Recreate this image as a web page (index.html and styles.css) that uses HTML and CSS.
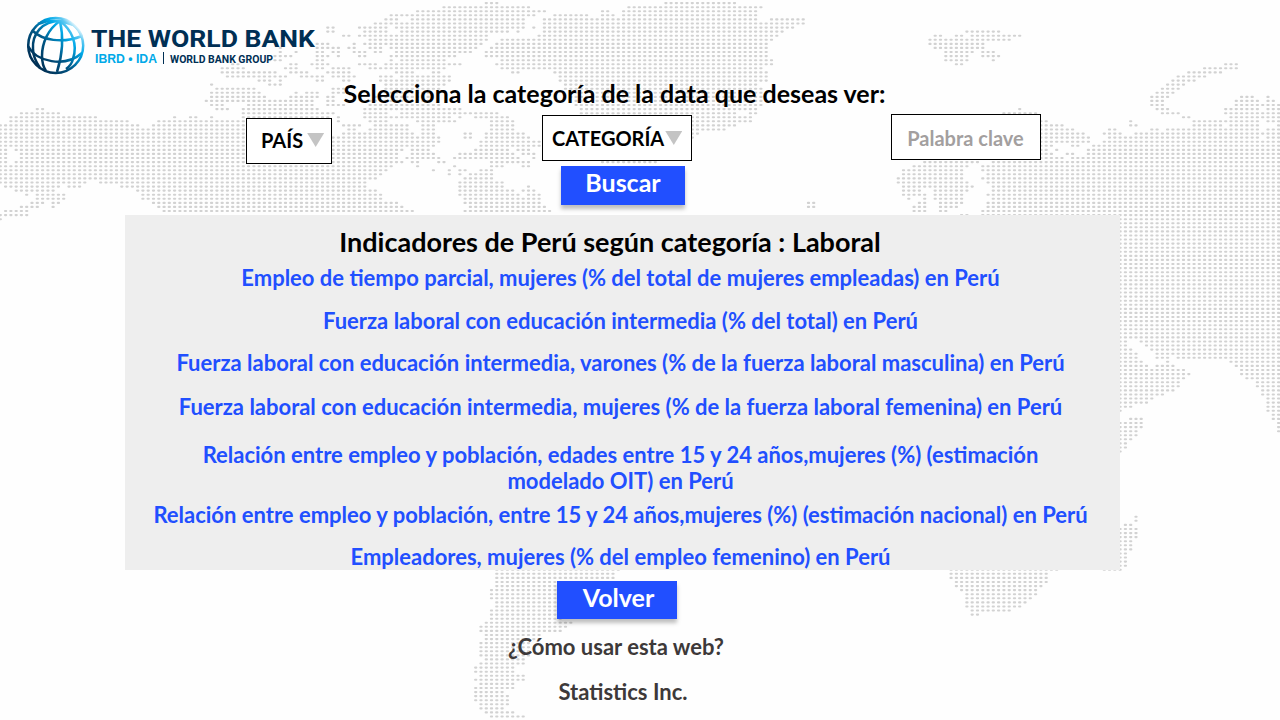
FILE: index.html
```html
<!DOCTYPE html>
<html lang="es">
<head>
<meta charset="utf-8">
<title>The World Bank - Indicadores</title>
<link rel="stylesheet" href="styles.css">
</head>
<body>
<svg class="map" width="1280" height="720" aria-hidden="true"><path id="dots"/></svg>
<div class="page">
  <header class="header">
    <svg class="logo" width="330" height="80" viewBox="0 0 330 80">
      <defs>
        <linearGradient id="globe" gradientUnits="userSpaceOnUse" x1="38" y1="66" x2="79" y2="27">
          <stop offset="0" stop-color="#002f54"/><stop offset=".38" stop-color="#005685"/>
          <stop offset=".72" stop-color="#00a9e8"/><stop offset=".88" stop-color="#5cc8f2"/><stop offset="1" stop-color="#fff"/>
        </linearGradient>
      </defs>
      <g fill="none" stroke="url(#globe)" stroke-width="2.5">
        <circle cx="55.7" cy="45.5" r="27.5" fill="#fff"/>
        <path d="M60 21C42 21 32 34 33 49c0 7 3 13 7 19"/>
        <path d="M60 21C48 29 42 43 42 56c0 7 2 12 4 15"/>
        <path d="M60 21c3 13 3 32-3 51"/>
        <path d="M60 21c12 9 18 23 13 38-1 4-4 8-7 10"/>
        <path d="M60 21c10 0 18 6 22 16"/>
        <path d="M38 24c7-3 14-4 22-3l14 4"/>
        <path d="M33 31c9 9 29 13 49 5"/>
        <path d="M28 46c8 16 37 22 54 7"/>
      </g>
      <text class="logo-name" x="91" y="47" textLength="224" lengthAdjust="spacingAndGlyphs">THE WORLD BANK</text>
      <text class="logo-ibrd" x="95" y="63.2" textLength="62" lengthAdjust="spacingAndGlyphs">IBRD • IDA</text>
      <rect x="163" y="52" width="1" height="12" fill="#002f54"/>
      <text class="logo-group" x="170" y="63" textLength="103" lengthAdjust="spacingAndGlyphs">WORLD BANK GROUP</text>
    </svg>
  </header>
  <h1 class="title">Selecciona la categoría de la data que deseas ver:</h1>
  <div class="filters">
    <div class="select country"><span>PAÍS</span><i class="arrow"></i></div>
    <div class="select category"><span>CATEGORÍA</span><i class="arrow"></i></div>
    <div class="select keyword"><span>Palabra clave</span></div>
  </div>
  <div class="button search">Buscar</div>
  <main class="panel">
    <h2 class="heading">Indicadores de Perú según categoría : Laboral</h2>
    <div class="item i1">Empleo de tiempo parcial, mujeres (% del total de mujeres empleadas) en Perú</div>
    <div class="item i2">Fuerza laboral con educación intermedia (% del total) en Perú</div>
    <div class="item i3">Fuerza laboral con educación intermedia, varones (% de la fuerza laboral masculina) en Perú</div>
    <div class="item i4">Fuerza laboral con educación intermedia, mujeres (% de la fuerza laboral femenina) en Perú</div>
    <div class="item i5">Relación entre empleo y población, edades entre 15 y 24 años,mujeres (%) (estimación<br>modelado OIT) en Perú</div>
    <div class="item i6">Relación entre empleo y población, entre 15 y 24 años,mujeres (%) (estimación nacional) en Perú</div>
    <div class="item i7">Empleadores, mujeres (% del empleo femenino) en Perú</div>
  </main>
  <div class="button back">Volver</div>
  <footer class="footer">
    <div class="help">¿Cómo usar esta web?</div>
    <div class="brand">Statistics Inc.</div>
  </footer>
</div>
<script src="map.js"></script>
</body>
</html>
```

FILE: map.js
```js
// Land runs of the dotted world map, "rows: from-to from-to", in page pixels.
const land = `
0: 485-499 664-735
1: 443-530 627-762
2: 417-546 602-610 622-757
3: 390-414 417-503 507-535 553-588 602-613 622-709 713-757
4: 385-399 412-524 543-594 598-757 770-803
5: 374-399 400-525 543-803
6: 327-334 358-387 395-525 532-536 542-793
7: 327-334 363-387 400-509 517-522 543-783 967-998
8: 343-350 358-487 538-777 935-941 955-963 972-1020
9: 368-487 500-772 930-942 945-967 972-1010
10: 317-330 354-357 363-480 495-767 930-942 945-983
11: 280-283 317-338 348-355 368-382 390-477 490-767 935-942 945-983
12: 277-282 293-297 317-323 332-338 353-367 373-383 395-472 485-492 497-767 945-973 982-993
13: 272-290 317-328 336-339 358-365 388-408 413-457 485-492 497-767 945-967 982-998
14: 267-283 317-323 390-393 400-447 502-772 945-967 992-995
15: 233-237 290-297 312-328 358-377 385-462 495-772 955-963 1225-1237
16: 222-243 285-300 317-323 332-353 368-447 500-762 1205-1237
17: 222-253 260-278 290-307 327-353 395-415 432-440 512-518 553-767 1188-1222
18: 227-287 300-323 332-355 380-390 400-450 558-767 1178-1207
19: 258-270 280-284 317-323 343-348 380-398 400-450 558-767 1173-1195
20: 210-213 270-280 383-447 563-757 1167-1183
21: 215-255 330-347 385-440 563-760 1162-1178
22: 210-260 296-300 307-320 332-345 380-430 568-760 1157-1173
23: 210-265 290-320 327-334 375-430 568-762 1152-1168 1242-1253 1266-1270
24: 205-285 290-312 327-334 370-430 573-762 1152-1163 1237-1258 1267-1273
25: 210-222 247-312 327-345 370-440 573-760 1152-1163 1237-1257 1263-1280
26: 37-43 215-228 240-318 363-375 382-460 578-745 750-757 1018-1022 1157-1168 1225-1258 1266-1280
27: 22-60 242-334 365-385 400-470 477-497 578-735 747-757 1003-1037 1162-1178 1225-1257 1262-1280
28: 10-97 172-177 190-197 210-214 242-330 335-339 363-397 400-453 458-463 472-507 578-752 1183-1188 1230-1258 1262-1280
29: 12-128 158-165 168-243 335-340 368-387 417-457 490-513 690-752 1042-1047 1128-1132 1193-1220 1225-1258 1266-1280
30: 0-137 152-243 343-360 375-408 420-437 490-513 690-735 1042-1063 1128-1135 1193-1222 1230-1258 1276-1280
31: 0-243 348-355 368-408 420-435 490-513 690-725 1042-1073 1108-1115 1152-1158 1167-1258 1266-1280
32: 0-243 343-415 422-435 463-470 485-523 690-697 1042-1083 1103-1122 1135-1258 1263-1280
33: 0-243 332-407 413-440 463-470 485-530 690-693 1042-1088 1108-1120 1125-1258 1267-1280
34: 0-243 332-438 480-530 535-543 1042-1088 1103-1247 1252-1280
35: 0-243 332-435 480-530 533-540 1042-1052 1072-1078 1093-1280
36: 0-8 17-243 332-403 412-430 473-510 517-530 1042-1047 1056-1059 1088-1280
37: 0-5 22-243 332-398 413-433 458-513 523-533 1042-1052 1067-1072 1088-1280
38: 0-5 22-243 332-398 408-438 453-470 473-520 533-536 1042-1063 1073-1083 1088-1280
39: 0-5 15-243 332-403 413-420 438-443 490-530 602-655 925-978 993-1280
40: 0-393 416-419 453-457 490-503 523-528 913-967 982-1280
41: 0-388 433-437 448-451 458-468 480-492 903-965 982-1280
42: 0-383 448-451 458-463 468-493 903-963 987-1280
43: 0-375 465-493 898-963 982-1280
44: 0-86 100-368 460-503 898-967 987-1280
45: 5-60 68-80 120-368 460-503 527-530 903-973 993-1280
46: 15-55 137-378 460-513 522-533 903-923 935-967 993-1280
47: 25-28 37-65 142-382 460-518 527-540 903-925 935-963 987-1280
48: 37-65 142-382 465-540 908-911 923-928 935-962 993-1280
49: 32-43 53-60 153-400 465-540 808-814 918-925 940-965 987-1280
50: 20-38 53-56 158-403 470-545 808-814 913-925 940-957 987-1280
51: 5-28 162-413 465-550 913-925 940-947 982-1280
52: 0-28 962-967 982-1280
53: 0-2 1118-1280
54-81: 1118-1280
82: 1118-1137 1140-1280
83: 1118-1127 1140-1280
84: 1118-1127 1146-1280
85: 1118-1132 1151-1280
86: 1118-1137 1156-1168 1172-1280
87: 1118-1137 1156-1168 1177-1280
88: 1118-1143 1166-1169 1230-1280
89: 1118-1148 1156-1174 1235-1280
90: 1118-1185 1240-1280
91: 1118-1190 1240-1280
92: 1118-1185 1245-1280
93: 1118-1180 1256-1280
94: 1118-1179 1256-1280
95: 1118-1174 1261-1280
96: 1118-1164 1261-1280
97: 1118-1153 1266-1280
98: 1118-1148 1266-1280
99: 1118-1132 1266-1280
100: 1118-1122 1266-1280
101: 1272-1280
102: 1129-1143 1272-1280
103-104: 1118-1143 1277-1280
105: 1118-1138 1277-1280
106: 1118-1138
107: 1118-1132
108-109: 1118-1127
110: 1118-1122
126-127: 1134-1138
128: 1124-1133
129-131: 1118-1138
132-134: 1118-1133
135-138: 1118-1127
139: 495-620 950-1058 1102-1122
140-141: 495-615 949-1048
142: 495-560 955-1048
143: 495-560 955-1042
144: 490-560 960-1037
145: 490-560 965-1037
146: 490-560 965-1032
147: 495-560 965-1027
148: 495-560 965-1021
149: 490-560 970-1011
150: 490-560 970-980
151: 490-560
152: 484-573
153: 478-567
154: 478-562
155-156: 484-540
157-160: 478-530
161: 484-525
162: 478-523
163-164: 473-515
165: 478-525
166: 473-525
167: 478-515
168: 473-515
169: 473-504
170-171: 473-509
172: 478-509
173: 478-504
174: 484-515
175: 489-525`;

const stepX = 5.282, stepY = 4.0767;
let path = "";
for (const line of land.trim().split("\n")) {
  const [rows, runs] = line.split(": ");
  const [first, last = first] = rows.split("-").map(Number);
  for (let row = first; row <= last; row++) {
    const y = (3.1 + row * stepY).toFixed(1);
    for (const run of runs.split(" ")) {
      const [from, to] = run.split("-").map(Number);
      for (let c = Math.ceil((from - 1.8) / stepX); ; c++) {
        const x = 0.32 + c * stepX;
        if (x > to + 1.2) break;
        if (x >= from - 1.5) path += `M${(x - 0.6).toFixed(1)} ${y}h1.2`;
      }
    }
  }
}
document.getElementById("dots").setAttribute("d", path);
```

FILE: styles.css
```css
body {
  margin: 0;
  background: #fefefe;
  font-family: Lato, "Open Sans", sans-serif;
  font-weight: 700;
  color: #000;
}
.map { position: absolute; top: 0; left: 0; z-index: -1; }
.map path { fill: none; stroke: #d2d2d2; stroke-width: 2.1; stroke-linecap: round; }
.page { width: 1280px; height: 720px; overflow: hidden; display: flex; flex-direction: column; }
.header { height: 80px; }
.logo { display: block; }
.logo-name { font: 700 24.8px Roboto, sans-serif; fill: #002f54; }
.logo-ibrd { font: 700 13.3px "Liberation Sans", sans-serif; fill: #00a9e8; }
.logo-group { font: 700 11.4px Roboto, sans-serif; fill: #002f54; }
.title { margin: 0; padding-right: 51px; font-size: 25px; line-height: 26px; text-align: center; }
.filters { display: flex; align-items: flex-start; height: 60px; padding: 8px 0 0 246px; box-sizing: border-box; }
.select {
  display: flex; align-items: center; box-sizing: border-box; height: 46px;
  border: 1px solid #000; background: #fff; font-size: 20px; line-height: 24px;
}
.country { width: 86px; margin-top: 4px; padding-left: 14px; gap: 4px; }
.country span { padding-bottom: 2px; }
.category { width: 150px; margin: 1px 0 0 210px; padding-left: 9px; gap: 1px; }
.keyword { width: 150px; margin-left: 199px; padding-right: 1px; justify-content: center; color: #a39f9f; }
.keyword span { padding-top: 1px; }
.arrow { width: 17px; height: 14px; margin-bottom: 2px; background: #c4c4c4; clip-path: polygon(0 0, 100% 0, 50% 100%); }
.category .arrow { margin-bottom: 0; }
.button {
  background: #214fff; color: #fff; font-size: 25px; text-align: center;
  box-shadow: 0 4px 4px rgba(0, 0, 0, .25); flex: none;
}
.search { width: 124px; height: 39px; margin-left: 561px; line-height: 33px; }
.panel {
  width: 995px; height: 355px; margin: 10px 0 0 125px; flex: none;
  background: #eee; color: #214fff; text-align: center; font-size: 22px; line-height: 26px;
}
.heading { margin: 0; padding: 12px 25px 0 0; font-size: 27px; line-height: 30px; color: #000; }
.item { white-space: nowrap; padding-right: 4px; }
.i1 { margin-top: 8px; }
.i2 { margin-top: 17px; }
.i3 { margin-top: 16px; }
.i4 { margin-top: 18px; }
.i5 { margin-top: 22px; }
.i6 { margin-top: 8px; }
.i7 { margin-top: 16px; }
.back { box-sizing: border-box; width: 120px; height: 38px; margin: 11px 0 0 557px; padding-left: 3px; line-height: 33px; }
.footer { color: #3d3939; font-size: 22px; line-height: 26px; text-align: center; }
.help { margin-top: 15px; padding-right: 48px; }
.brand { margin-top: 19px; padding-right: 34px; }
```
